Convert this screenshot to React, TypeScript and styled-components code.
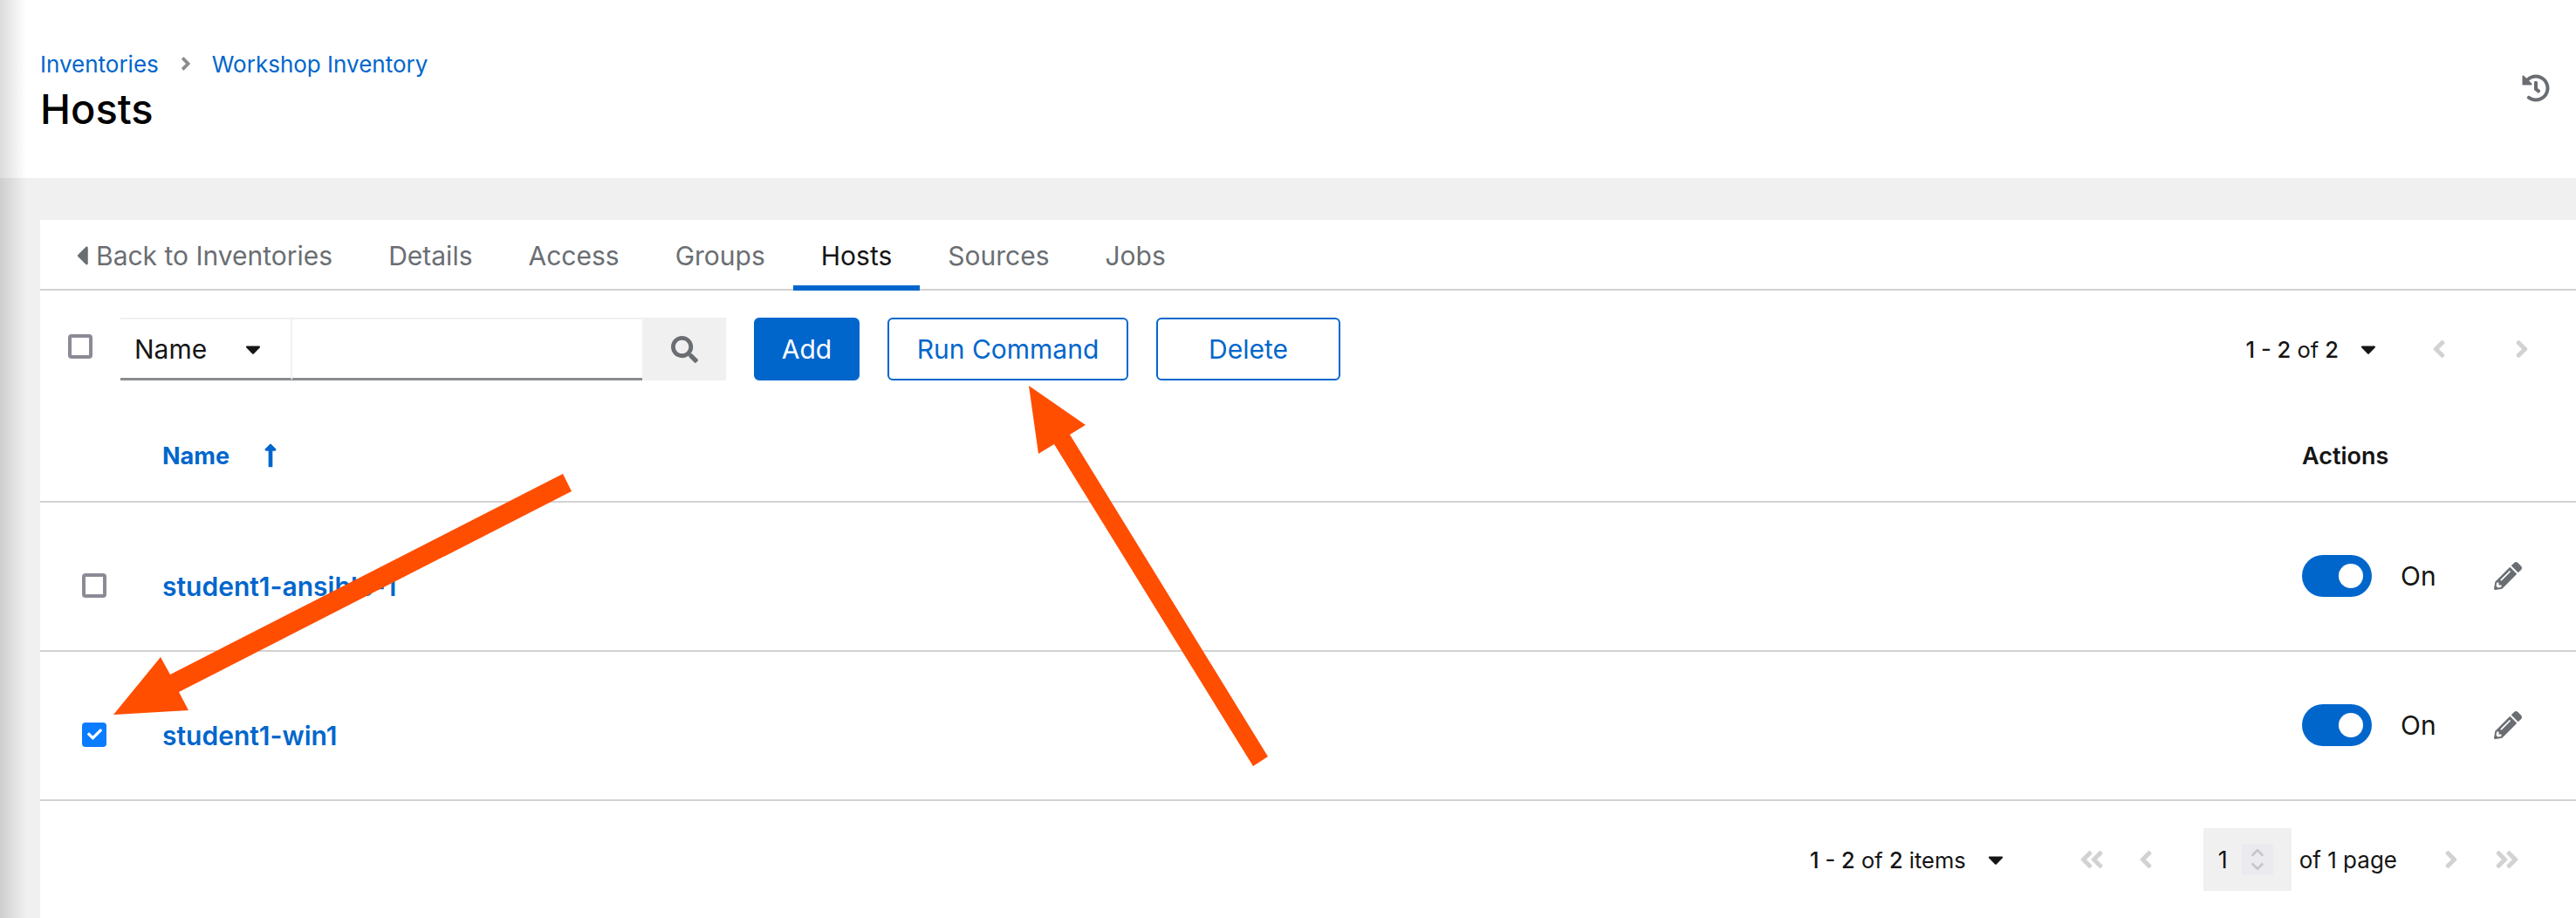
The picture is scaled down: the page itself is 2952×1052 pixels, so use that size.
import { createGlobalStyle, styled } from 'styled-components';
import {
  FaAngleDoubleLeft,
  FaAngleDoubleRight,
  FaAngleLeft,
  FaAngleRight,
  FaCaretDown,
  FaCaretLeft,
  FaCheck,
  FaHistory,
  FaLongArrowAltUp,
  FaPencilAlt,
  FaSearch,
} from 'react-icons/fa';
import { LuChevronDown, LuChevronUp } from 'react-icons/lu';

const GlobalStyle = createGlobalStyle`
  html, body {
    margin: 0;
    padding: 0;
    background: #f0f0f0;
  }
  * {
    box-sizing: border-box;
  }
`;

const Page = styled.div`
  position: relative;
  width: 2952px;
  height: 1052px;
  overflow: hidden;
  display: flex;
  flex-direction: column;
  font-family: Inter, 'Liberation Sans', sans-serif;
  font-size: 27px;
  color: #151515;
`;

const SidebarShadow = styled.div`
  position: absolute;
  top: 0;
  left: 0;
  bottom: 0;
  width: 30px;
  background: linear-gradient(90deg, rgba(0, 0, 0, 0.14), rgba(0, 0, 0, 0));
`;

const Header = styled.header`
  height: 204px;
  flex: none;
  background: #fff;
  padding: 54px 30px 0 46px;
  display: flex;
  justify-content: space-between;
`;

const Breadcrumb = styled.nav`
  display: flex;
  align-items: center;
  height: 38px;
  color: #06c;
  font-size: 26px;
  > svg {
    margin: 0 18px 0 19px;
    color: #8a8d90;
    font-size: 24px;
  }
`;

const Title = styled.h1`
  margin: 5px 0 0;
  font-size: 47px;
  line-height: 56px;
  font-weight: 500;
  color: #000;
`;

const HistoryButton = styled.div`
  margin-top: 31px;
  color: #6a6e73;
  font-size: 32px;
  line-height: 0;
`;

const Card = styled.main`
  flex: 1;
  margin: 48px 0 0 46px;
  background: #fff;
  display: flex;
  flex-direction: column;
`;

const Tabs = styled.div`
  height: 81px;
  flex: none;
  display: flex;
  padding-left: 10px;
  border-bottom: 2px solid #d2d2d2;
`;

const Tab = styled.div<{ $active?: boolean }>`
  position: relative;
  display: flex;
  align-items: center;
  padding: 2px 32px 0;
  font-size: 30px;
  white-space: nowrap;
  color: ${(p) => (p.$active ? '#151515' : '#6a6e73')};
  &::after {
    content: '';
    display: ${(p) => (p.$active ? 'block' : 'none')};
    position: absolute;
    left: 0;
    right: 0;
    bottom: -2px;
    height: 6px;
    background: #06c;
  }
  > svg {
    margin: 0 -2px 0 -12px;
    font-size: 36px;
  }
`;

const Toolbar = styled.div`
  height: 139px;
  flex: none;
  padding: 31px 46px 0 32px;
  display: flex;
  align-items: flex-start;
  gap: 32px;
`;

const Checkbox = styled.div<{ $checked?: boolean }>`
  width: 28px;
  height: 28px;
  flex: none;
  border-radius: 4px;
  display: flex;
  align-items: center;
  justify-content: center;
  color: #fff;
  font-size: 17px;
  background: ${(p) => (p.$checked ? '#0a7cff' : '#fff')};
  border: ${(p) => (p.$checked ? 'none' : '4px solid #8b8b96')};
`;

const ToolbarCheck = styled.div`
  padding-top: 19px;
`;

const SearchGroup = styled.div`
  display: flex;
  height: 72px;
  width: 694px;
  flex: none;
`;

const SearchSelect = styled.div`
  width: 197px;
  padding: 0 16px;
  display: flex;
  align-items: center;
  justify-content: space-between;
  border-top: 2px solid #f0f0f0;
  border-right: 2px solid #f0f0f0;
  border-bottom: 3px solid #8a8d90;
  font-size: 30px;
  > svg {
    margin-right: 13px;
    font-size: 28px;
  }
`;

const SearchInput = styled.div`
  flex: 1;
  border-top: 2px solid #f0f0f0;
  border-bottom: 3px solid #8a8d90;
`;

const SearchButton = styled.div`
  width: 96px;
  background: #f0f0f0;
  color: #6a6e73;
  display: flex;
  align-items: center;
  justify-content: center;
  font-size: 31px;
`;

const Button = styled.div<{ $primary?: boolean; $width: number }>`
  width: ${(p) => p.$width}px;
  height: 72px;
  flex: none;
  border-radius: 6px;
  display: flex;
  align-items: center;
  justify-content: center;
  font-size: 30px;
  color: ${(p) => (p.$primary ? '#fff' : '#06c')};
  background: ${(p) => (p.$primary ? '#06c' : '#fff')};
  border: 2px solid #06c;
`;

const Pager = styled.div`
  margin-left: auto;
  display: flex;
  align-items: center;
  height: 72px;
  font-size: 25.5px;
`;

const FooterNav = styled(Pager)`
  margin-left: 0;
`;

const Strong = styled.span`
  font-weight: 500;
`;

const Caret = styled.span`
  display: flex;
  margin-left: 20px;
  font-size: 28px;
`;

const PagerNav = styled.span<{ $gap: number; $first: number }>`
  display: flex;
  align-items: center;
  gap: ${(p) => p.$gap}px;
  margin-left: ${(p) => p.$first}px;
  color: #d2d2d2;
  font-size: 32px;
`;

const TableHead = styled.div`
  height: 104px;
  flex: none;
  padding: 0 62px 2px 140px;
  display: flex;
  align-items: center;
  justify-content: space-between;
  border-bottom: 2px solid #d2d2d2;
  font-size: 27px;
  font-weight: 700;
`;

const SortName = styled.div`
  display: flex;
  align-items: center;
  color: #06c;
  > svg {
    margin-left: 32px;
    font-size: 30px;
  }
`;

const ActionsLabel = styled.div`
  width: 252px;
  font-weight: 600;
`;

const Row = styled.div`
  height: 171px;
  flex: none;
  padding: 20px 62px 0 48px;
  display: flex;
  align-items: center;
  border-bottom: 2px solid #d2d2d2;
`;

const HostName = styled.div`
  margin-left: 64px;
  padding-top: 3px;
  font-size: 30px;
  font-weight: 600;
  color: #06c;
`;

const RowActions = styled.div`
  margin-left: auto;
  margin-top: -22px;
  display: flex;
  align-items: center;
  width: 252px;
`;

const Toggle = styled.div`
  width: 80px;
  height: 48px;
  border-radius: 24px;
  background: #06c;
  display: flex;
  align-items: center;
  justify-content: flex-end;
  padding-right: 10px;
  &::after {
    content: '';
    width: 28px;
    height: 28px;
    border-radius: 50%;
    background: #fff;
  }
`;

const ToggleLabel = styled.div`
  margin-left: 33px;
  font-size: 30px;
`;

const EditIcon = styled.div`
  margin-left: auto;
  display: flex;
  color: #6a6e73;
  font-size: 32px;
`;

const Footer = styled.footer`
  padding: 31px 63px 0 0;
  display: flex;
  justify-content: flex-end;
  align-items: flex-start;
`;

const PageInput = styled.div`
  width: 101px;
  height: 72px;
  margin-left: 50px;
  background: #f0f0f0;
  display: flex;
  align-items: center;
  padding-left: 17px;
  font-size: 27px;
`;

const Spinner = styled.div`
  width: 36px;
  height: 36px;
  margin-left: 16px;
  background: #ebebef;
  display: flex;
  flex-direction: column;
  align-items: center;
  justify-content: center;
  color: #c6c7cc;
  font-size: 22px;
  > svg {
    margin: -3px 0;
  }
`;

const PageCount = styled.div`
  margin-left: 9px;
  font-size: 26px;
`;

const Annotation = styled.svg`
  position: absolute;
  top: 0;
  left: 0;
  pointer-events: none;
`;

const hosts = [
  { name: 'student1-ansible-1', checked: false },
  { name: 'student1-win1', checked: true },
];

export default function App() {
  return (
    <Page>
      <GlobalStyle />
      <Header>
        <div>
          <Breadcrumb>
            Inventories
            <FaAngleRight />
            Workshop Inventory
          </Breadcrumb>
          <Title>Hosts</Title>
        </div>
        <HistoryButton>
          <FaHistory />
        </HistoryButton>
      </Header>

      <Card>
        <Tabs>
          <Tab>
            <FaCaretLeft />
            Back to Inventories
          </Tab>
          <Tab>Details</Tab>
          <Tab>Access</Tab>
          <Tab>Groups</Tab>
          <Tab $active>Hosts</Tab>
          <Tab>Sources</Tab>
          <Tab>Jobs</Tab>
        </Tabs>

        <Toolbar>
          <ToolbarCheck>
            <Checkbox />
          </ToolbarCheck>
          <SearchGroup>
            <SearchSelect>
              Name
              <FaCaretDown />
            </SearchSelect>
            <SearchInput />
            <SearchButton>
              <FaSearch />
            </SearchButton>
          </SearchGroup>
          <Button $primary $width={121}>
            Add
          </Button>
          <Button $width={276}>Run Command</Button>
          <Button $width={211}>Delete</Button>
          <Pager>
            <span>
              <Strong>1 - 2</Strong> of <Strong>2</Strong>
            </span>
            <Caret>
              <FaCaretDown />
            </Caret>
            <PagerNav $first={51} $gap={63}>
              <FaAngleLeft />
              <FaAngleRight />
            </PagerNav>
          </Pager>
        </Toolbar>

        <TableHead>
          <SortName>
            Name
            <FaLongArrowAltUp />
          </SortName>
          <ActionsLabel>Actions</ActionsLabel>
        </TableHead>

        {hosts.map((host) => (
          <Row key={host.name}>
            <Checkbox $checked={host.checked}>{host.checked && <FaCheck />}</Checkbox>
            <HostName>{host.name}</HostName>
            <RowActions>
              <Toggle />
              <ToggleLabel>On</ToggleLabel>
              <EditIcon>
                <FaPencilAlt />
              </EditIcon>
            </RowActions>
          </Row>
        ))}

        <Footer>
          <Pager>
            <span>
              <Strong>1 - 2</Strong> of <Strong>2</Strong> items
            </span>
            <Caret>
              <FaCaretDown />
            </Caret>
          </Pager>
          <FooterNav>
            <PagerNav $first={80} $gap={30}>
              <FaAngleDoubleLeft />
              <FaAngleLeft />
            </PagerNav>
            <PageInput>
              1
              <Spinner>
                <LuChevronUp strokeWidth={3} />
                <LuChevronDown strokeWidth={3} />
              </Spinner>
            </PageInput>
            <PageCount>of 1 page</PageCount>
            <PagerNav $first={46} $gap={32}>
              <FaAngleRight />
              <FaAngleDoubleRight />
            </PagerNav>
          </FooterNav>
        </Footer>
      </Card>

      <SidebarShadow />

      <Annotation width="2952" height="1052" viewBox="0 0 2952 1052">
        <polygon
          fill="#ff4e00"
          points="645,543 655,563 205,793 216,814 130,819 184,753 195,773"
        />
        <polygon
          fill="#ff4e00"
          points="1179,442 1244,487 1226,498 1453,867 1436,878 1208,509 1190,520"
        />
      </Annotation>
    </Page>
  );
}
